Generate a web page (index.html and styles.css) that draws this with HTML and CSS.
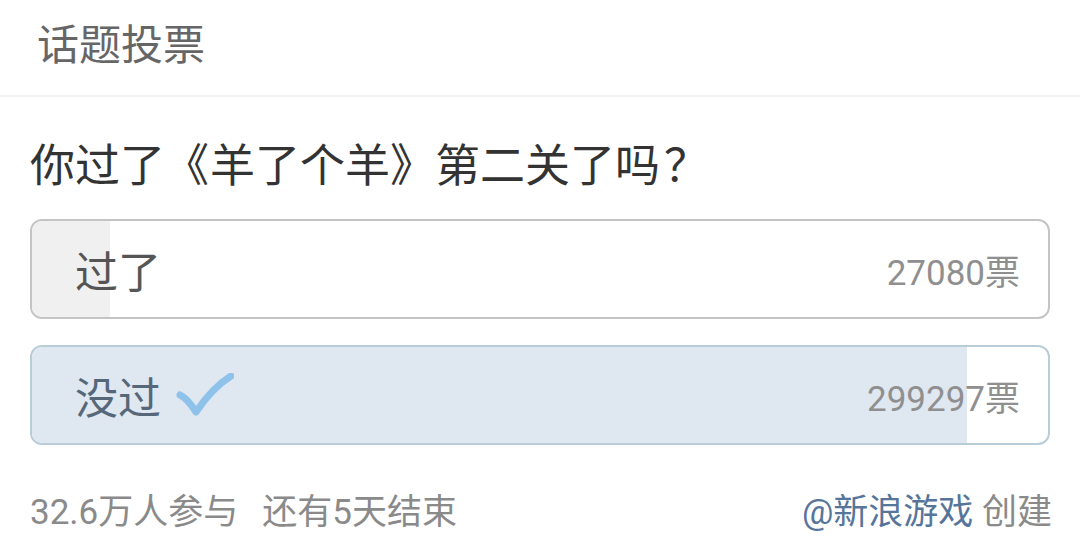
FILE: index.html
```html
<!DOCTYPE html>
<html lang="zh">
<head>
<meta charset="utf-8">
<title>话题投票</title>
<link rel="stylesheet" href="styles.css">
</head>
<body>
<div class="page">
  <header class="header">话题投票</header>
  <main class="content">
    <h1 class="question">你过了<span class="punct punct-open">《</span>羊了个羊<span class="punct punct-close">》</span>第二关了吗<span class="punct punct-q">？</span></h1>
    <div class="option">
      <div class="bar bar-gray" style="width:7.7%"></div>
      <span class="label">过了</span>
      <span class="count">27080票</span>
    </div>
    <div class="option option-selected">
      <div class="bar bar-blue" style="width:92%"></div>
      <span class="label">没过
        <svg class="check" width="58" height="44" viewBox="0 0 58 44"><path d="M4 22 Q11 25 20 39 Q36 15 55 3" fill="none" stroke="#8fc2ea" stroke-width="7" stroke-linecap="round" stroke-linejoin="round"/></svg>
      </span>
      <span class="count">299297票</span>
    </div>
    <div class="footer">
      <span class="stats">32.6万人参与<span class="sep"></span>还有5天结束</span>
      <span class="creator"><span class="author">@新浪游戏</span> 创建</span>
    </div>
  </main>
</div>
</body>
</html>
```
FILE: styles.css
```css
html, body {
  margin: 0;
  padding: 0;
  background: #ffffff;
}
body {
  width: 1080px;
  height: 536px;
  overflow: hidden;
  font-family: Roboto, "Noto Sans CJK SC", sans-serif;
}
.page {
  display: flex;
  flex-direction: column;
}
.header {
  height: 97px;
  box-sizing: border-box;
  padding: 20px 0 0 37px;
  font-size: 42px;
  line-height: 52px;
  color: #666666;
  border-bottom: 2px solid #f2f2f2;
}
.content {
  display: flex;
  flex-direction: column;
  padding: 0 30px;
}
.question {
  margin: 36px 0 26px 0;
  font-family: "Noto Sans CJK SC", sans-serif;
  font-size: 45px;
  font-weight: normal;
  line-height: 60px;
  color: #333333;
  white-space: nowrap;
}
.punct {
  display: inline-block;
  width: 45px;
  text-align: center;
}
.punct-open {
  text-indent: -2px;
}
.punct-close {
  text-indent: 0;
}
.punct-q {
  text-indent: 4px;
}
.option {
  position: relative;
  height: 100px;
  box-sizing: border-box;
  border: 2px solid #c4c4c4;
  border-radius: 12px;
  display: flex;
  align-items: center;
  justify-content: space-between;
  padding: 0 28px 0 43px;
  overflow: hidden;
  margin-bottom: 26px;
}
.option-selected {
  border-color: #b9cdd9;
}
.bar {
  position: absolute;
  left: 0;
  top: 0;
  bottom: 0;
}
.bar-gray {
  background: #f0f0f0;
}
.bar-blue {
  background: #dfe7f1;
}
.label {
  position: relative;
  display: flex;
  align-items: center;
  font-size: 43px;
  color: #555555;
}
.option-selected .label {
  color: #56677a;
}
.check {
  margin-left: 15px;
  margin-top: 0;
}
.count {
  position: relative;
  font-size: 35px;
  color: #8f8f8f;
}
.footer {
  display: flex;
  justify-content: space-between;
  align-items: center;
  margin-top: 18px;
  font-size: 35px;
  line-height: 48px;
  color: #8a8a8a;
}
.sep {
  display: inline-block;
  width: 24px;
}
.creator {
  margin-right: -2px;
}
.author {
  color: #56759a;
}
```
